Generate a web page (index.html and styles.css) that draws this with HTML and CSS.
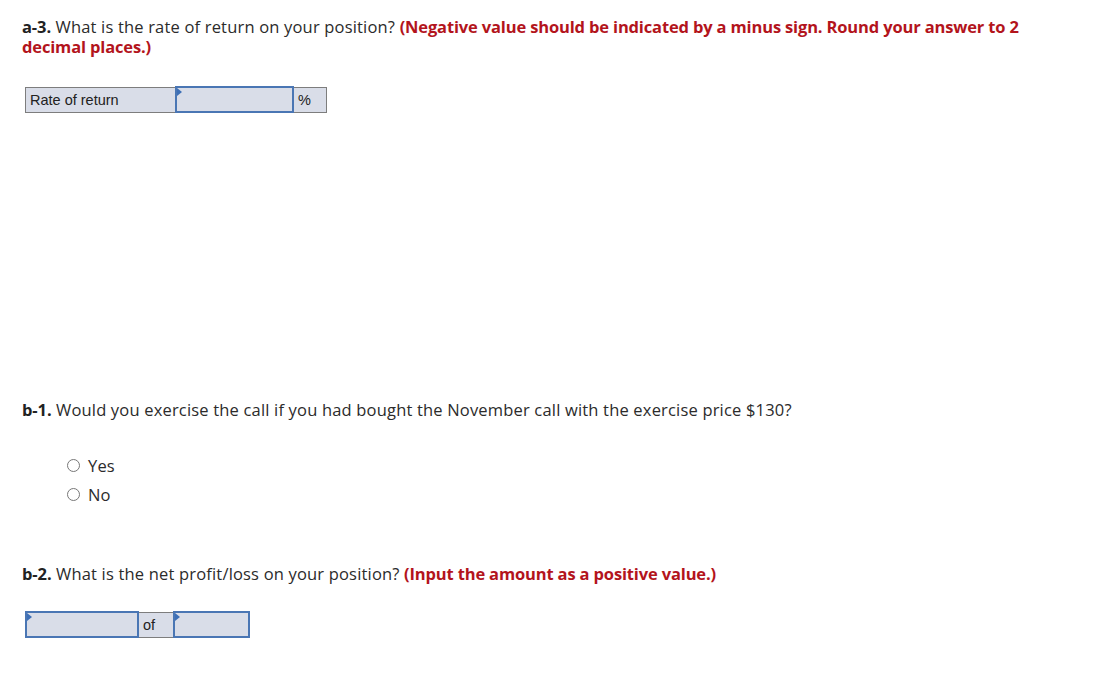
FILE: index.html
```html
<!DOCTYPE html>
<html>
<head>
<meta charset="utf-8">
<link rel="stylesheet" href="styles.css">
</head>
<body>
<div class="page">
  <p class="q q-a3"><b>a-3.</b> What is the rate of return on your position? <span class="note">(Negative value should be indicated by a minus sign. Round your answer to 2 decimal places.)</span></p>
  <table class="grid grid-a3">
    <tr>
      <td class="label">Rate of return</td>
      <td class="input w118"><span class="flag"></span></td>
      <td class="unit">%</td>
    </tr>
  </table>

  <p class="q q-b1"><b>b-1.</b> Would you exercise the call if you had bought the November call with the exercise price $130?</p>
  <ul class="radios">
    <li><span class="radio"></span>Yes</li>
    <li><span class="radio"></span>No</li>
  </ul>

  <p class="q q-b2"><b>b-2.</b> What is the net profit/loss on your position? <span class="note">(Input the amount as a positive value.)</span></p>
  <table class="grid grid-b2">
    <tr>
      <td class="input w113"><span class="flag"></span></td>
      <td class="unit of">of</td>
      <td class="input w76"><span class="flag"></span></td>
    </tr>
  </table>
</div>
</body>
</html>
```

FILE: styles.css
```css
html, body {
  margin: 0;
  padding: 0;
  background: #fff;
}
.page {
  padding: 17px 0 0 22px;
  font-family: "Open Sans", "Liberation Sans", sans-serif;
  font-size: 16.5px;
  letter-spacing: 0.18px;
  color: #2b2b2b;
  width: 1012px;
}
.q {
  margin: 0;
  line-height: 20px;
}
.q b {
  font-weight: 700;
  color: #222;
  letter-spacing: -0.1px;
}
.note {
  color: #b3141c;
  font-weight: 700;
  letter-spacing: -0.15px;
}
.grid {
  border-collapse: collapse;
  font-family: "Liberation Sans", Arial, sans-serif;
  font-size: 14.5px;
  letter-spacing: 0;
  color: #222;
  margin-left: 3px;
}
.grid td {
  height: 23px;
  padding: 0;
  border: 1px solid #7d7d7d;
  background: #d9dde8;
  vertical-align: middle;
}
.grid-a3 {
  margin-top: 29px;
}
.label {
  width: 145px;
  padding-left: 4px !important;
}
.unit {
  padding-left: 4px !important;
  width: 28px;
}
.of {
  width: 30px;
}
.input {
  position: relative;
  border: 2px solid #4a76b4 !important;
}
.w118 { width: 115px; }
.w113 { width: 110px; }
.w76 { width: 73px; }
.flag {
  position: absolute;
  left: 0;
  top: 0;
  width: 0;
  height: 0;
  border-top: 4px solid transparent;
  border-bottom: 4px solid transparent;
  border-left: 5px solid #3d6fb6;
}
.q-b1 {
  margin-top: 287px;
}
.radios {
  list-style: none;
  margin: 31px 0 0 45px;
  padding: 0;
}
.radios li {
  display: flex;
  align-items: center;
  height: 29px;
}
.radio {
  width: 11px;
  height: 11px;
  border: 1px solid #777;
  border-radius: 50%;
  margin-right: 8px;
  background: #fff;
}
.q-b2 {
  margin-top: 55px;
}
.grid-b2 {
  margin-top: 27px;
}
```
